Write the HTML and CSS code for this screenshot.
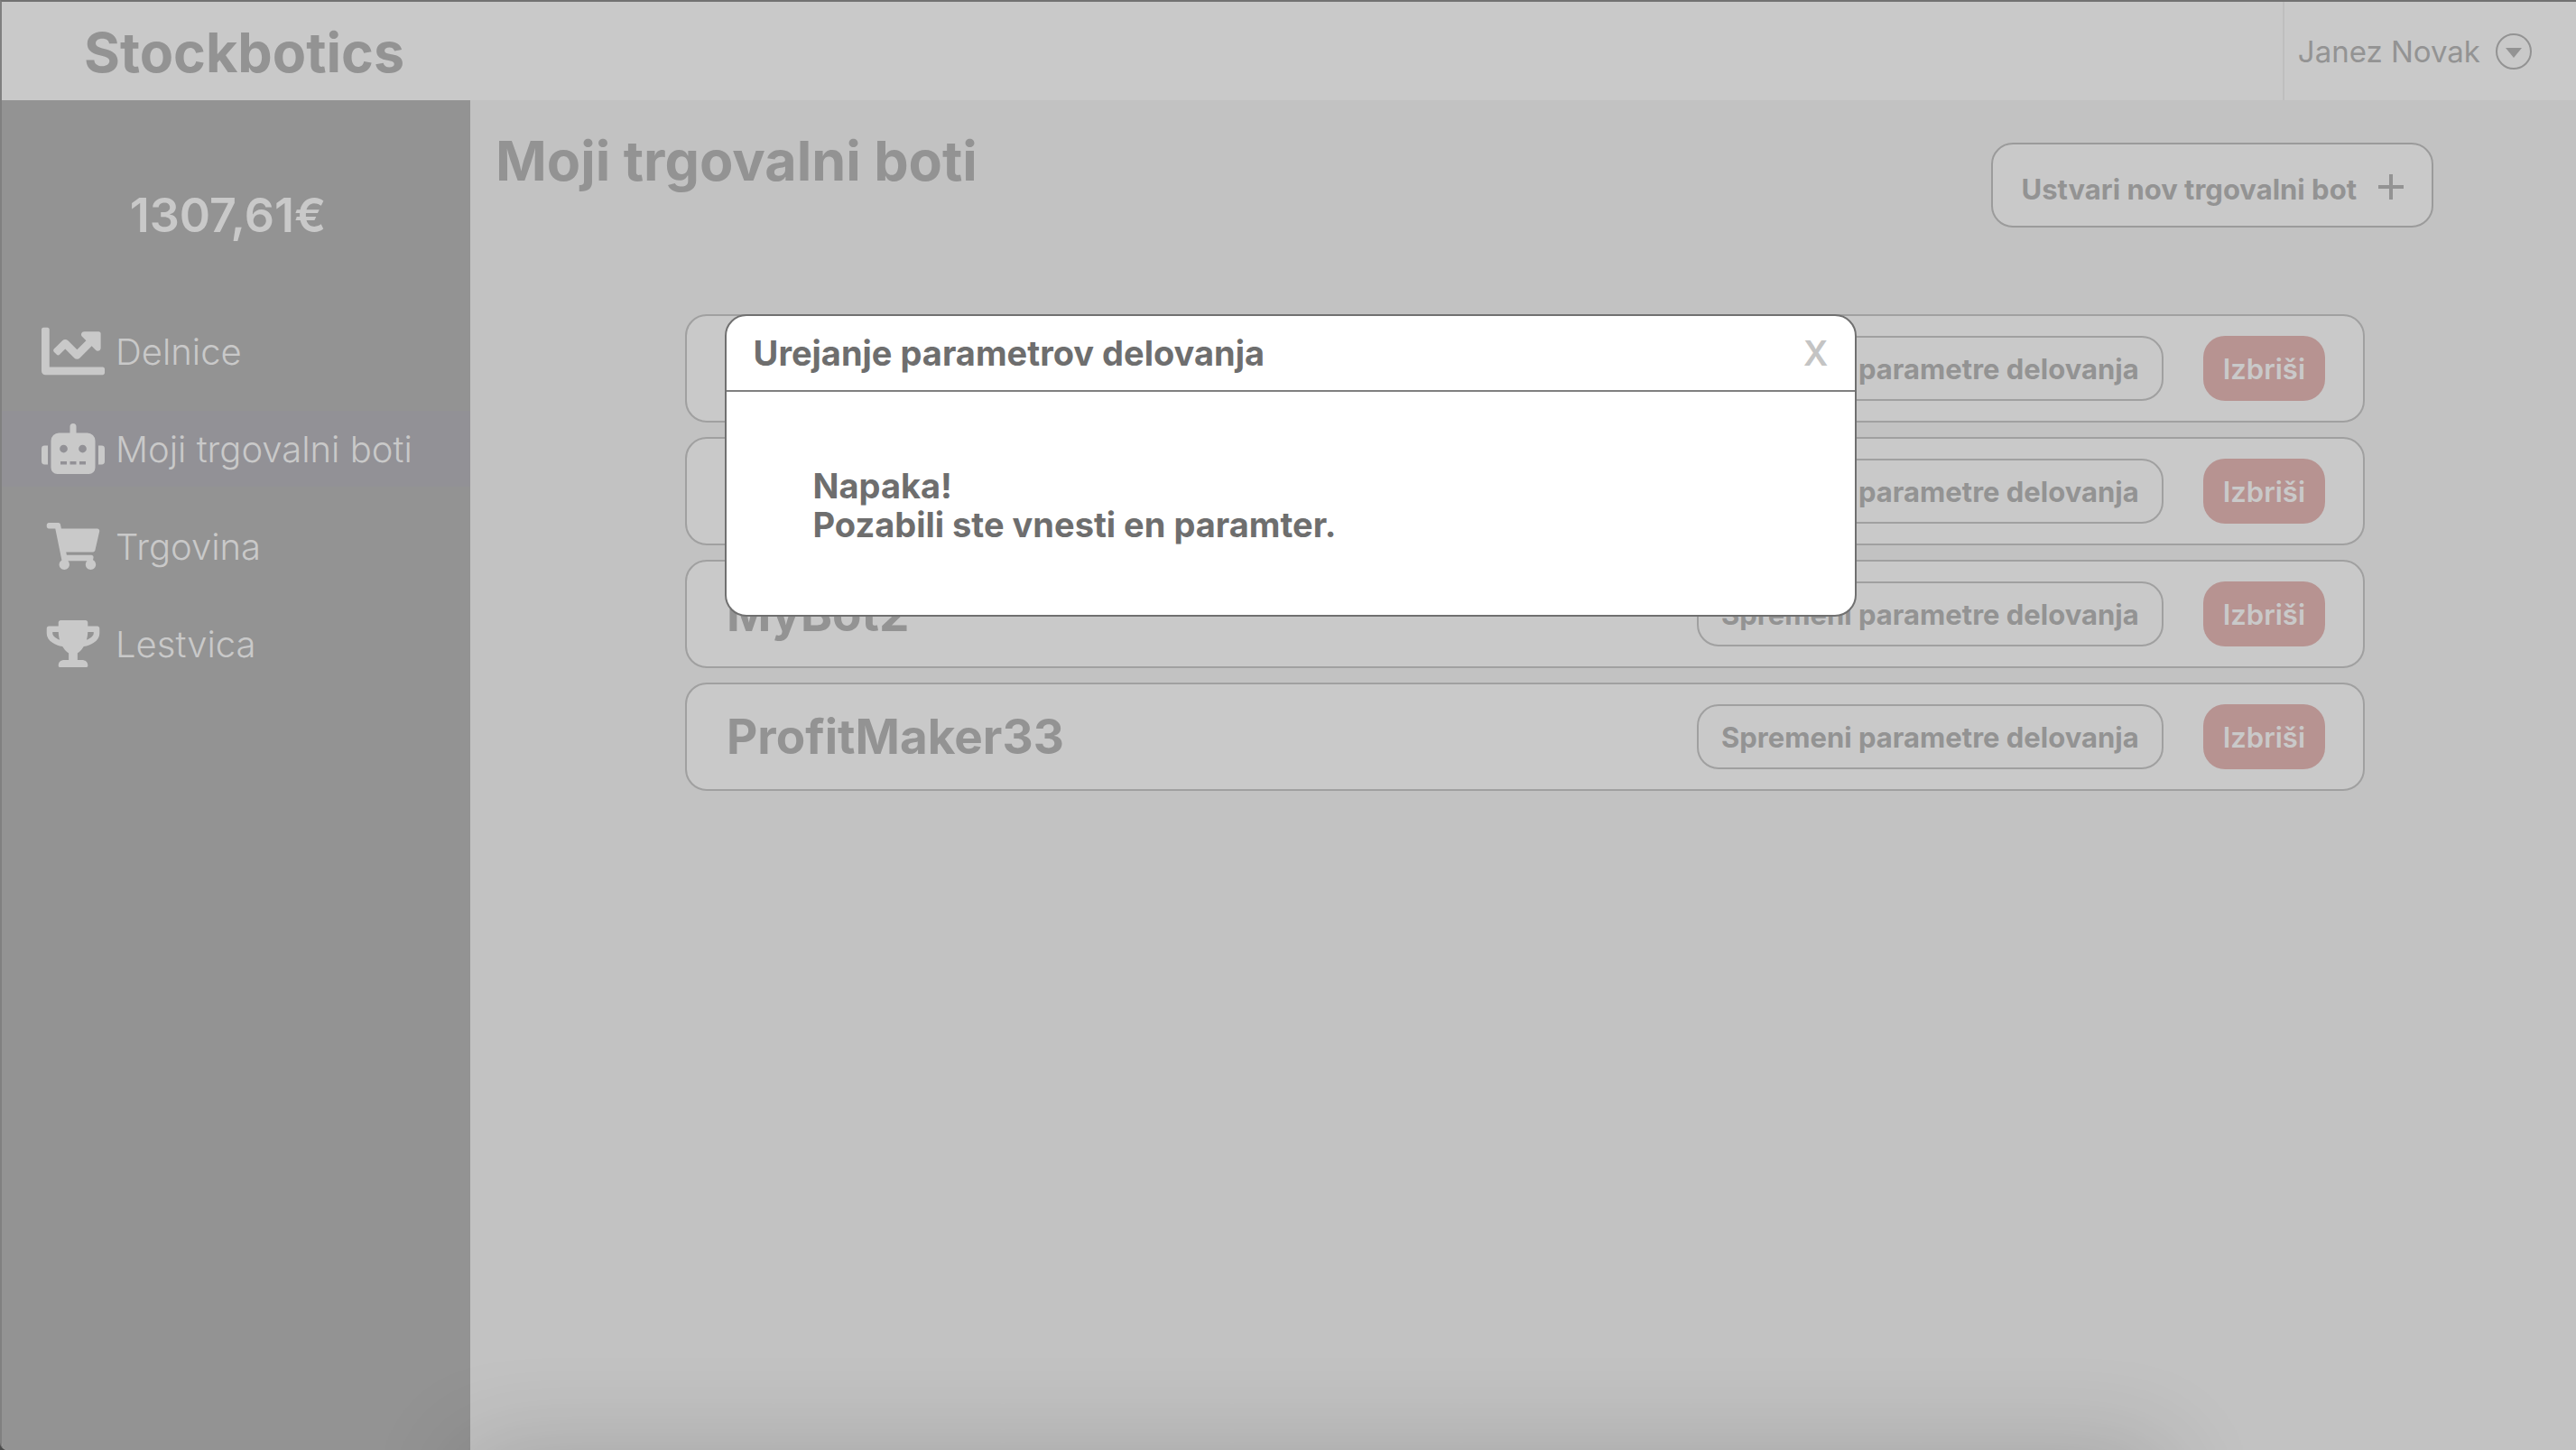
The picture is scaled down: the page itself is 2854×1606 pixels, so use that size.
FILE: index.html
```html
<!DOCTYPE html>
<html lang="sl">
<head>
<meta charset="utf-8">
<meta name="viewport" content="width=device-width, initial-scale=1">
<title>Stockbotics</title>
<link rel="stylesheet" href="styles.css">
</head>
<body>
<div class="app">
  <header class="topbar">
    <a class="brand" href="#">Stockbotics</a>
    <button class="account" type="button">
      <span>Janez Novak</span>
      <svg class="account-icon" viewBox="0 0 42 42" aria-hidden="true">
        <circle cx="21" cy="21" r="19" fill="none" stroke="currentColor" stroke-width="2"/>
        <path d="M12 17h18l-9 11z" fill="currentColor"/>
      </svg>
    </button>
  </header>
  <div class="layout">
    <aside class="sidebar">
      <p class="balance">1307,61€</p>
      <nav class="menu">
        <a class="menu-item" href="#">
          <svg class="menu-icon menu-icon-chart" viewBox="0 0 512 512" aria-hidden="true"><path d="M496 384H64V80c0-8.840-7.160-16-16-16H16C7.160 64 0 71.160 0 80v336c0 17.670 14.330 32 32 32h464c8.840 0 16-7.160 16-16v-32c0-8.840-7.160-16-16-16zM464 96H345.940c-21.380 0-32.090 25.850-16.970 40.970l32.400 32.400L288 242.750l-73.370-73.370c-12.500-12.500-32.760-12.500-45.250 0l-68.690 68.690c-6.250 6.250-6.250 16.380 0 22.630l22.620 22.620c6.250 6.250 16.380 6.250 22.630 0L192 237.250l73.370 73.370c12.500 12.500 32.760 12.500 45.250 0l96-96 32.400 32.400c15.120 15.120 40.970 4.410 40.970-16.970V112c.010-8.840-7.150-16-15.990-16z"/></svg>
          <span>Delnice</span>
        </a>
        <a class="menu-item menu-item-active" href="#" aria-current="page">
          <svg class="menu-icon" viewBox="0 0 640 512" aria-hidden="true"><path d="M32,224H64V416H32A31.962,31.962,0,0,1,0,384V256A31.962,31.962,0,0,1,32,224Zm512-48V448a64.063,64.063,0,0,1-64,64H160a64.063,64.063,0,0,1-64-64V176a79.974,79.974,0,0,1,80-80H288V32a32,32,0,0,1,64,0V96H464A79.974,79.974,0,0,1,544,176ZM264,256a40,40,0,1,0-40,40A39.997,39.997,0,0,0,264,256Zm-8,128H192v32h64Zm96,0H288v32h64ZM456,256a40,40,0,1,0-40,40A39.997,39.997,0,0,0,456,256Zm-8,128H384v32h64ZM640,256V384a31.962,31.962,0,0,1-32,32H576V224h32A31.962,31.962,0,0,1,640,256Z"/></svg>
          <span>Moji trgovalni boti</span>
        </a>
        <a class="menu-item" href="#">
          <svg class="menu-icon menu-icon-small" viewBox="0 0 576 512" aria-hidden="true"><path d="M528.120 301.319l47.273-208C578.806 78.301 567.391 64 551.990 64H159.208l-9.166-44.810C147.758 8.021 137.930 0 126.529 0H24C10.745 0 0 10.745 0 24v16c0 13.255 10.745 24 24 24h69.883l70.248 343.435C147.325 417.100 136 435.222 136 456c0 30.928 25.072 56 56 56s56-25.072 56-56c0-15.674-6.447-29.835-16.824-40h209.647C430.447 426.165 424 440.326 424 456c0 30.928 25.072 56 56 56s56-25.072 56-56c0-22.172-12.888-41.332-31.579-50.405l5.517-24.276c3.413-15.018-8.002-29.319-23.403-29.319H218.117l-6.545-32h293.145c11.206 0 20.920-7.754 23.403-18.681z"/></svg>
          <span>Trgovina</span>
        </a>
        <a class="menu-item" href="#">
          <svg class="menu-icon menu-icon-small" viewBox="0 0 576 512" aria-hidden="true"><path d="M552 64H448V24c0-13.300-10.700-24-24-24H152c-13.300 0-24 10.700-24 24v40H24C10.700 64 0 74.700 0 88v56c0 35.700 22.500 72.400 61.900 100.700 31.500 22.700 69.800 37.100 110 41.700C203.300 338.500 240 360 240 360v72h-48c-35.300 0-64 20.700-64 56v12c0 6.600 5.400 12 12 12h296c6.600 0 12-5.400 12-12v-12c0-35.300-28.700-56-64-56h-48v-72s36.700-21.500 68.100-73.600c40.300-4.600 78.600-19 110-41.700 39.300-28.300 61.900-65 61.900-100.700V88c0-13.300-10.700-24-24-24zM99.300 192.800C74.900 175.200 64 155.600 64 144v-16h64.200c1 32.600 5.800 61.200 12.800 86.200-15.100-5.200-29.200-12.400-41.700-21.400zM512 144c0 16.100-17.700 36.100-35.300 48.800-12.500 9-26.700 16.200-41.800 21.400 7-25 11.800-53.600 12.800-86.200H512v16z"/></svg>
          <span>Lestvica</span>
        </a>
      </nav>
    </aside>
    <main class="content">
      <div class="content-head">
        <h1 class="page-title">Moji trgovalni boti</h1>
        <button class="create" type="button">
          <span>Ustvari nov trgovalni bot</span>
          <svg class="create-icon" viewBox="0 0 28 28" aria-hidden="true"><path d="M14 0v28M0 14h28" stroke="currentColor" stroke-width="4"/></svg>
        </button>
      </div>
      <ul class="bots">
        <li class="bot">
          <h2 class="bot-name"></h2>
          <button class="edit" type="button">Spremeni parametre delovanja</button>
          <button class="delete" type="button">Izbriši</button>
        </li>
        <li class="bot">
          <h2 class="bot-name"></h2>
          <button class="edit" type="button">Spremeni parametre delovanja</button>
          <button class="delete" type="button">Izbriši</button>
        </li>
        <li class="bot">
          <h2 class="bot-name">MyBot2</h2>
          <button class="edit" type="button">Spremeni parametre delovanja</button>
          <button class="delete" type="button">Izbriši</button>
        </li>
        <li class="bot">
          <h2 class="bot-name">ProfitMaker33</h2>
          <button class="edit" type="button">Spremeni parametre delovanja</button>
          <button class="delete" type="button">Izbriši</button>
        </li>
      </ul>
    </main>
  </div>
  <dialog class="modal" open aria-labelledby="modal-title">
    <div class="modal-head">
      <h2 class="modal-title" id="modal-title">Urejanje parametrov delovanja</h2>
      <button class="modal-close" type="button" aria-label="Zapri">X</button>
    </div>
    <p class="modal-body">Napaka!<br>Pozabili ste vnesti en paramter.</p>
  </dialog>
</div>
<div class="dock-shadow"></div>
</body>
</html>
```
FILE: styles.css
```css
* {
  box-sizing: border-box;
}

body {
  margin: 0;
  background: #4c4c4c;
  color: #939393;
  font-family: Inter, "Liberation Sans", sans-serif;
  font-optical-sizing: none;
}

h1, h2, p, ul {
  margin: 0;
  padding: 0;
}

button {
  font: inherit;
  color: inherit;
  cursor: pointer;
}

a {
  color: inherit;
  text-decoration: none;
}

.app {
  position: relative;
  display: flex;
  flex-direction: column;
  min-height: 100vh;
  border-top: 2px solid #727272;
  border-left: 2px solid #808080;
  border-bottom-left-radius: 8px;
  background: #c2c2c2;
  overflow: hidden;
}

.topbar {
  display: flex;
  justify-content: space-between;
  height: 109px;
  padding: 2px 0 0 91px;
  background: #c9c9c9;
}

.brand {
  align-self: center;
  font-size: 61px;
  font-weight: 700;
}

.account {
  display: flex;
  align-items: center;
  gap: 16px;
  margin-top: -2px;
  padding: 0 48px 0 15px;
  border: 0;
  border-left: 2px solid #bebebe;
  background: none;
  font-size: 33px;
}

.account-icon {
  width: 42px;
  height: 42px;
}

.layout {
  display: flex;
  flex: 1;
}

.sidebar {
  flex: none;
  width: 519px;
  padding-top: 98px;
  background: #939393;
  color: #c9c9c9;
}

.balance {
  padding-right: 18px;
  font-size: 52px;
  font-weight: 600;
  line-height: 60px;
  text-align: center;
}

.menu {
  display: flex;
  flex-direction: column;
  gap: 24px;
  padding-top: 78px;
}

.menu-item {
  display: flex;
  align-items: center;
  gap: 12px;
  height: 84px;
  padding-left: 44px;
  font-size: 40px;
  font-weight: 300;
}

.menu-item-active {
  background: #929196;
}

.menu-icon {
  width: 70px;
  height: 56px;
  fill: currentColor;
}

.menu-icon-chart {
  height: 70px;
}

.menu-icon-small {
  height: 52px;
}

.content {
  flex: 1;
  min-width: 0;
}

.content-head {
  display: flex;
  justify-content: space-between;
  align-items: flex-start;
  padding: 31px 158px 0 28px;
}

.page-title {
  font-size: 61px;
  font-weight: 700;
  line-height: 72px;
}

.create {
  display: flex;
  align-items: center;
  gap: 24px;
  height: 94px;
  margin-top: 16px;
  padding: 8px 31px 0;
  border: 2px solid #9b9b9b;
  border-radius: 24px;
  background: #c9c9c9;
  font-size: 31px;
  font-weight: 700;
}

.create-icon {
  width: 28px;
  height: 28px;
  margin-top: -4px;
}

.bots {
  display: flex;
  flex-direction: column;
  gap: 16px;
  padding: 96px 234px 0 238px;
  list-style: none;
}

.bot {
  display: flex;
  align-items: center;
  gap: 44px;
  height: 120px;
  padding: 0 42px 0 44px;
  border: 2px solid #a0a0a0;
  border-radius: 24px;
  background: #c9c9c9;
}

.bot-name {
  flex: 1;
  font-size: 53px;
  font-weight: 700;
}

.edit,
.delete {
  height: 72px;
  border-radius: 24px;
  font-size: 31px;
}

.edit {
  padding: 0 25px;
  border: 2px solid #a0a0a0;
  background: none;
  font-weight: 700;
}

.delete {
  padding: 0 22px;
  border: 0;
  background: #b79391;
  color: #c9c9c9;
  font-weight: 600;
}

.modal {
  position: absolute;
  top: 346px;
  left: 4px;
  width: 44%;
  margin: 0 auto;
  padding: 0;
  border: 2px solid #707070;
  border-radius: 24px;
  background: #fff;
  color: #6e6e6e;
  font-size: 38px;
  font-weight: 700;
}

.modal-head {
  display: flex;
  justify-content: space-between;
  align-items: center;
  height: 84px;
  padding: 0 30px;
  border-bottom: 2px solid #808080;
}

.modal-title {
  font-size: inherit;
  font-weight: inherit;
}

.modal-close {
  padding: 0;
  border: 0;
  background: none;
  color: #c4c4c4;
  font-weight: 600;
}

.modal-body {
  padding: 83px 96px 78px;
  line-height: 43px;
}

.dock-shadow {
  position: fixed;
  top: 100%;
  left: 18%;
  right: 16%;
  height: 200px;
  box-shadow: 0 0 110px rgba(0, 0, 0, 0.16);
}
```
